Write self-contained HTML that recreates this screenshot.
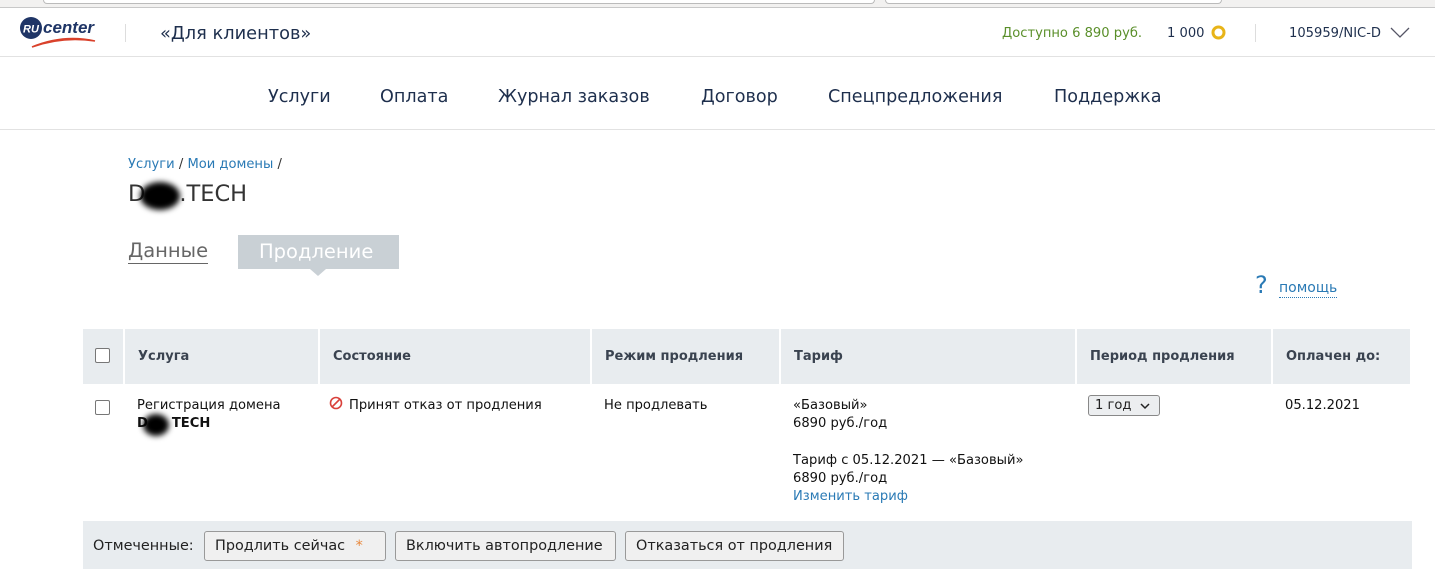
<!DOCTYPE html>
<html><head><meta charset="utf-8"><style>
*{margin:0;padding:0;box-sizing:border-box}
body{width:1435px;height:584px;overflow:hidden;background:#fff;font-family:"DejaVu Sans","Liberation Sans",sans-serif;color:#222;position:relative}
.a{position:absolute;white-space:nowrap}
.strip{left:0;top:0;width:1435px;height:8px;background:#f2f1f0;border-bottom:1px solid #c8c8c8}
.inp{top:0;height:4px;background:#fff;border:1px solid #bbb;border-top:none;border-radius:0 0 4px 4px}
.nav{top:87px;font-size:17.6px;color:#1e2f4d}
.th{top:329px;height:55px;background:#e8ecef;font-size:13px;font-weight:bold;color:#3a4350;padding:20px 0 0 13px}
.td{font-size:13.1px;color:#111}
.cb{width:15px;height:15px;border:1.5px solid #777;border-radius:2px;background:#fff}
.btn{top:531px;height:30px;border:1px solid #999;border-radius:3px;background:#f0f0f0;font-size:14.4px;color:#222;padding:6px 10px 0}
.blur{background:#000;border-radius:50%;filter:blur(3px)}
</style></head><body>
<div class="a strip"></div>
<div class="a inp" style="left:43px;width:832px"></div>
<div class="a inp" style="left:885px;width:337px"></div>
<div class="a" style="left:0;top:56px;width:1435px;height:1px;background:#e2e2e2"></div>
<svg class="a" style="left:18px;top:14px" width="82" height="36" viewBox="0 0 82 36">
<circle cx="13" cy="14" r="11" fill="#1f3566"/>
<text x="5" y="18.5" font-family="Liberation Sans" font-weight="bold" font-style="italic" font-size="11" fill="#fff">RU</text>
<text x="25" y="19" font-family="Liberation Sans" font-weight="bold" font-style="italic" font-size="17" fill="#1f3566">center</text>
<path d="M14 33 Q45 20 77 27 Q45 22 14 33Z" fill="#d9412b" stroke="#d9412b" stroke-width="1.5"/>
</svg>
<div class="a" style="left:125px;top:24px;width:1px;height:18px;background:#ddd"></div>
<div class="a" style="left:160px;top:23px;font-size:17.8px;color:#1e2f4d">«Для клиентов»</div>
<div class="a" style="left:1002px;top:26px;font-size:13.1px;color:#5a8f2a">Доступно 6 890 руб.</div>
<div class="a" style="left:1167px;top:26px;font-size:13.1px;color:#1e2f4d">1 000</div>
<svg class="a" style="left:1211px;top:25px" width="15" height="15"><circle cx="7.5" cy="7.5" r="5.5" fill="none" stroke="#e8b418" stroke-width="3"/></svg>
<div class="a" style="left:1255px;top:24px;width:1px;height:18px;background:#ddd"></div>
<div class="a" style="left:1289px;top:26px;font-size:13.1px;color:#1e2f4d">105959/NIC-D</div>
<svg class="a" style="left:1390px;top:27px" width="20" height="12"><path d="M1 1 L10 10 L19 1" fill="none" stroke="#556" stroke-width="1.3"/></svg>
<div class="a nav" style="left:268px">Услуги</div>
<div class="a nav" style="left:380px">Оплата</div>
<div class="a nav" style="left:498px">Журнал заказов</div>
<div class="a nav" style="left:701px">Договор</div>
<div class="a nav" style="left:828px">Спецпредложения</div>
<div class="a nav" style="left:1054px">Поддержка</div>
<div class="a" style="left:0;top:129px;width:1435px;height:1px;background:#e2e2e2"></div>
<div class="a" style="left:128px;top:157px;font-size:13.1px;color:#2a7ab5">Услуги <span style="color:#333">/</span> Мои домены <span style="color:#333">/</span></div>
<div class="a" style="left:128px;top:181px;font-size:22.5px;color:#333">D<span style="display:inline-block;width:34px"></span>.TECH</div>
<div class="a blur" style="left:140px;top:182px;width:40px;height:28px"></div>
<div class="a" style="left:128px;top:239px;font-size:19.5px;color:#666;border-bottom:1px solid #666;line-height:24px">Данные</div>
<div class="a" style="left:238px;top:235px;width:161px;height:34px;background:#c9d0d5;color:#fff;font-size:19.5px;padding:5px 0 0 21px">Продление</div>
<div class="a" style="left:310px;top:269px;width:0;height:0;border-left:8px solid transparent;border-right:8px solid transparent;border-top:7px solid #c9d0d5"></div>
<div class="a" style="left:1255px;top:271px;font-size:24px;color:#2a7ab5">?</div>
<div class="a" style="left:1279px;top:279px;font-size:14px;color:#2a7ab5;border-bottom:1px dotted #2a7ab5;line-height:18px">помощь</div>
<div class="a th" style="left:83px;width:40px"></div>
<div class="a cb" style="left:95px;top:348px"></div>
<div class="a th" style="left:125px;width:193px">Услуга</div>
<div class="a th" style="left:320px;width:270px">Состояние</div>
<div class="a th" style="left:592px;width:187px">Режим продления</div>
<div class="a th" style="left:781px;width:294px">Тариф</div>
<div class="a th" style="left:1077px;width:194px">Период продления</div>
<div class="a th" style="left:1273px;width:137px">Оплачен до:</div>
<div class="a cb" style="left:95px;top:400px"></div>
<div class="a td" style="left:137px;top:398px">Регистрация домена</div>
<div class="a td" style="left:137px;top:416px;font-weight:bold">D<span style="display:inline-block;width:24px"></span>TECH</div>
<div class="a blur" style="left:143px;top:414px;width:26px;height:22px"></div>
<svg class="a" style="left:329px;top:396px" width="14" height="14"><circle cx="7" cy="7" r="5.5" fill="none" stroke="#d9413b" stroke-width="1.6"/><path d="M3.5 10.5 L10.5 3.5" stroke="#d9413b" stroke-width="1.6"/></svg>
<div class="a td" style="left:349px;top:398px">Принят отказ от продления</div>
<div class="a td" style="left:604px;top:398px">Не продлевать</div>
<div class="a td" style="left:793px;top:397px;line-height:18px">«Базовый»<br>6890 руб./год</div>
<div class="a td" style="left:793px;top:452px;line-height:18px">Тариф с 05.12.2021 — «Базовый»<br>6890 руб./год<br><span style="color:#2a7ab5">Изменить тариф</span></div>
<div class="a" style="left:1088px;top:395px;width:72px;height:21px;border:1px solid #888;border-radius:3px;background:#eceef0;font-size:13.1px;padding:2px 0 0 6px">1 год</div>
<svg class="a" style="left:1140px;top:402px" width="10" height="8"><path d="M1 2 L5 6 L9 2" fill="none" stroke="#222" stroke-width="1.5"/></svg>
<div class="a td" style="left:1285px;top:398px">05.12.2021</div>
<div class="a" style="left:83px;top:521px;width:1329px;height:48px;background:#e8ecef"></div>
<div class="a" style="left:93px;top:538px;font-size:14.4px;color:#222">Отмеченные:</div>
<div class="a btn" style="left:204px;width:182px">Продлить сейчас <span style="color:#e8873a;margin-left:6px">*</span></div>
<div class="a btn" style="left:395px;width:221px">Включить автопродление</div>
<div class="a btn" style="left:625px;width:219px">Отказаться от продления</div>
</body></html>
